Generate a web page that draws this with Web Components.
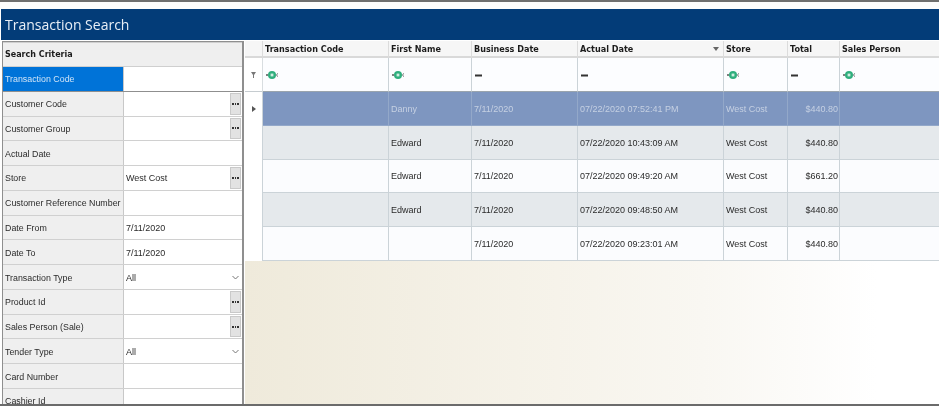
<!DOCTYPE html>
<html>
<head>
<meta charset="utf-8">
<title>Transaction Search</title>
<style>
  html, body { margin: 0; padding: 0; height: 100%; overflow: hidden; background: #fff; }
  body { font: 9px "Liberation Sans", sans-serif; color: #2b2b2b; }
</style>
</head>
<body>
<transaction-page>
  <criteria-panel slot="left">
    <criteria-row label="Transaction Code" active></criteria-row>
    <criteria-row label="Customer Code" lookup></criteria-row>
    <criteria-row label="Customer Group" lookup></criteria-row>
    <criteria-row label="Actual Date"></criteria-row>
    <criteria-row label="Store" value="West Cost" lookup></criteria-row>
    <criteria-row label="Customer Reference Number"></criteria-row>
    <criteria-row label="Date From" value="7/11/2020"></criteria-row>
    <criteria-row label="Date To" value="7/11/2020"></criteria-row>
    <criteria-row label="Transaction Type" value="All" dropdown></criteria-row>
    <criteria-row label="Product Id" lookup></criteria-row>
    <criteria-row label="Sales Person (Sale)" lookup></criteria-row>
    <criteria-row label="Tender Type" value="All" dropdown></criteria-row>
    <criteria-row label="Card Number"></criteria-row>
    <criteria-row label="Cashier Id"></criteria-row>
  </criteria-panel>
  <results-grid slot="right">
    <grid-row kind="header" cells="Transaction Code|First Name|Business Date|Actual Date|Store|Total|Sales Person"></grid-row>
    <grid-row kind="filter" cells="c|c|=|=|c|=|c"></grid-row>
    <grid-row kind="selected" cells="|Danny|7/11/2020|07/22/2020 07:52:41 PM|West Cost|$440.80|"></grid-row>
    <grid-row kind="alt" cells="|Edward|7/11/2020|07/22/2020 10:43:09 AM|West Cost|$440.80|"></grid-row>
    <grid-row kind="plain" cells="|Edward|7/11/2020|07/22/2020 09:49:20 AM|West Cost|$661.20|"></grid-row>
    <grid-row kind="alt" cells="|Edward|7/11/2020|07/22/2020 09:48:50 AM|West Cost|$440.80|"></grid-row>
    <grid-row kind="plain" cells="||7/11/2020|07/22/2020 09:23:01 AM|West Cost|$440.80|"></grid-row>
  </results-grid>
</transaction-page>

<script>
class TransactionPage extends HTMLElement {
  constructor() {
    super();
    this.attachShadow({ mode: 'open' }).innerHTML = `
      <style>
        :host { display: flex; flex-direction: column; width: 939px; height: 406px; overflow: hidden; filter: blur(0.5px); }
        .top { height: 2px; background: #6f6f6f; flex: none; }
        .gap { height: 7px; flex: none; background: #fdfdfd; }
        .title {
          height: 31px; flex: none; background: #033c78; color: #e9eff6;
          font: 14px "Open Sans", "Noto Sans", sans-serif;
          display: flex; align-items: center; padding-left: 4px; margin-left: 1px;
          box-sizing: border-box;
        }
        .main { flex: 1; min-height: 0; display: flex; padding: 1px 0 0 2px; }
        .bottom { height: 2px; flex: none; background: #6b6b6b; }
      </style>
      <div class="top"></div>
      <div class="gap"></div>
      <div class="title">Transaction Search</div>
      <div class="main"><slot name="left"></slot><slot name="right"></slot></div>
      <div class="bottom"></div>`;
  }
}

class CriteriaPanel extends HTMLElement {
  constructor() {
    super();
    this.attachShadow({ mode: 'open' }).innerHTML = `
      <style>
        :host { display: block; width: 242px; flex: none; box-sizing: border-box; overflow: hidden;
          border: 1px solid #8f8f8f; border-right-width: 2px; border-bottom: 0; padding-top: 1px; background: #cfcfcf; }
        .head { height: 23px; background: #efefef; font: bold 8px "DejaVu Sans", sans-serif; color: #1c1c1c;
          display: flex; align-items: center; padding-left: 2px; margin-bottom: 1px; }
      </style>
      <div class="head">Search Criteria</div>
      <slot></slot>`;
  }
}

class CriteriaRow extends HTMLElement {
  constructor() {
    super();
    this.attachShadow({ mode: 'open' });
  }
  connectedCallback() {
    const label = this.getAttribute('label') || '';
    const value = this.getAttribute('value') || '';
    let extra = '';
    if (this.hasAttribute('lookup')) extra = '<span class="dots"><i></i><i></i><i></i></span>';
    if (this.hasAttribute('dropdown')) extra = `<svg width="7" height="5" viewBox="0 0 7 5"><path d="M.5 1 3.5 4 6.5 1" fill="none" stroke="#777"/></svg>`;
    this.shadowRoot.innerHTML = `
      <style>
        :host { display: grid; grid-template-columns: 121px 1fr; height: 24.77px; box-sizing: border-box;
          border-bottom: 1px solid #d0d0d0; background: #fff; }
        .label { background: #efefef; border-right: 1px solid #c8c8c8; display: flex; align-items: center; padding: 1px 0 0 2px;
          font-size: 8.85px; white-space: nowrap; }
        :host([active]) .label { background: #0073d8; color: #cfe4f7; }
        :host([active]) { border-bottom-color: #8f8f8f; }
        .value { display: flex; align-items: center; justify-content: space-between; padding-left: 2px; min-width: 0; }
        .value span:first-child { padding-top: 1px; }
        .dots { align-self: stretch; width: 11px; margin: 1px 1px 1px 0; background: #e2e2e2; border: 1px solid #c9c9c9;
          box-sizing: border-box; display: flex; align-items: center; justify-content: center; gap: 1px; }
        .dots i { width: 1.5px; height: 2px; background: #333; }
        svg { margin-right: 3px; }
      </style>
      <div class="label">${label}</div>
      <div class="value"><span>${value}</span>${extra}</div>`;
  }
}

class ResultsGrid extends HTMLElement {
  constructor() {
    super();
    this.attachShadow({ mode: 'open' }).innerHTML = `
      <style>
        :host { display: block; flex: 1; min-width: 0; overflow: hidden; margin-left: 1px;
          background: linear-gradient(90deg, #efeadb 0%, #f6f3ea 45%, #f9f7f2 66%, #ffffff 91%);
          --cols: 18px 126px 83px 106px 146px 64px 52px 110px; }
      </style>
      <slot></slot>`;
  }
}

const FILTER_ICON = `<svg width="12" height="10" viewBox="0 0 12 10"><circle cx="1" cy="5" r="1" fill="#555"/><circle cx="6" cy="5" r="4" fill="#2fae7d"/><rect x="4.6" y="3.6" width="2.8" height="2.8" fill="#cfeee0"/><path d="M11.6 3.4a2 2 0 0 0 0 3.2" fill="none" stroke="#666" stroke-width="1"/></svg>`;
const EQUALS_ICON = `<svg width="7" height="3" viewBox="0 0 7 3"><rect y=".5" width="7" height="2" fill="#333"/></svg>`;

class GridRow extends HTMLElement {
  constructor() {
    super();
    this.attachShadow({ mode: 'open' });
  }
  connectedCallback() {
    const kind = this.getAttribute('kind');
    const cells = (this.getAttribute('cells') || '').split('|');
    const marker = kind === 'filter'
      ? '<svg width="5" height="6" viewBox="0 0 5 6"><path d="M0 0H5L3 3V6H2V3Z" fill="#777"/></svg>'
      : kind === 'selected'
      ? '<svg width="4" height="6" viewBox="0 0 4 6"><path d="M0 0 4 3 0 6Z" fill="#555"/></svg>' : '';
    const html = cells.map((c, i) => {
      if (kind === 'filter') return `<div class="cell">${c === 'c' ? FILTER_ICON : EQUALS_ICON}</div>`;
      const right = i === 5 && kind !== 'header' ? ' right' : '';
      const sort = kind === 'header' && i === 3 ? '<svg class="sort" width="6" height="4" viewBox="0 0 6 4"><path d="M0 0H6L3 4Z" fill="#666"/></svg>' : '';
      return `<div class="cell${right}">${c}${sort}</div>`;
    }).join('');
    this.shadowRoot.innerHTML = `
      <style>
        :host { display: grid; grid-template-columns: var(--cols); box-sizing: border-box; height: 33.8px; }
        :host([kind=header]) { height: 17px; }
        :host([kind=filter]) { height: 34px; }
        .mark { background: #fff; display: flex; align-items: center; justify-content: center; border-right: 1px solid #cbd3d8; padding-top: 1px; box-sizing: border-box; }
        .cell { position: relative; display: flex; align-items: center; padding: 1px 3px 0 2px; box-sizing: border-box; min-width: 0;
          border-right: 1px solid #cbd3d8; border-bottom: 1px solid #cbd3d8; white-space: nowrap; background: #fbfcfe; }
        .right { justify-content: flex-end; padding-right: 1px; }
        .sort { position: absolute; right: 4px; top: 6px; }
        :host([kind=header]) .mark, :host([kind=header]) .cell { background: #f6f6f6; border-bottom: 2px solid #d9d9d9; border-right-color: #dcdcdc;
          font: bold 8.1px "DejaVu Sans", sans-serif; color: #1c1c1c; }
        :host([kind=filter]) .mark { border-bottom: 1px solid #c6ccd0; border-right: 1px solid #d8dde0; }
        :host([kind=filter]) .cell { background: #fcfdff; border-bottom-color: #9aa4ad; padding-left: 3px; }
        :host([kind=selected]) .cell { background: #7e96c0; color: #c5d0e2; border-right-color: #93a8c9; border-bottom-color: #93a8c9; }
        :host([kind=alt]) .cell { background: #e5e9ec; }
      </style>
      <div class="mark">${marker}</div>${html}`;
  }
}

customElements.define('transaction-page', TransactionPage);
customElements.define('criteria-panel', CriteriaPanel);
customElements.define('criteria-row', CriteriaRow);
customElements.define('results-grid', ResultsGrid);
customElements.define('grid-row', GridRow);
</script>
</body>
</html>
